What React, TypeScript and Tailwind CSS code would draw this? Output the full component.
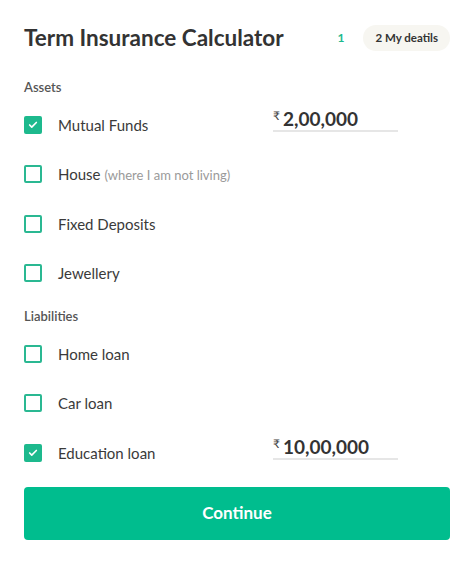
import { Check } from "lucide-react";

const assets = [
  { label: "Mutual Funds", checked: true, amount: "2,00,000" },
  { label: "House", note: "(where I am not living)", checked: false },
  { label: "Fixed Deposits", checked: false },
  { label: "Jewellery", checked: false },
];

const liabilities = [
  { label: "Home loan", checked: false },
  { label: "Car loan", checked: false },
  { label: "Education loan", checked: true, amount: "10,00,000" },
];

type Item = { label: string; note?: string; checked: boolean; amount?: string };

function Row({ item }: { item: Item }) {
  return (
    <div className="flex h-[49.5px] items-center">
      <div
        className={
          item.checked
            ? "flex h-[18px] w-[18px] items-center justify-center rounded-[2px] bg-[#1db98d]"
            : "h-[18px] w-[18px] rounded-[2px] border-2 border-[#2ab892]"
        }
      >
        {item.checked && <Check className="h-[10px] w-[10px] text-white" strokeWidth={4} />}
      </div>
      <div className="ml-4 flex-1 text-[15px] text-[#3a3a3a]">
        {item.label}
        {item.note && <span className="ml-1 text-[13px] text-[#9a9a9a]">{item.note}</span>}
      </div>
      {item.amount && (
        <div className="mr-[52px] flex w-[125px] -translate-y-[5px] items-start border-b-2 border-[#e6e6e6] pb-0">
          <span className="mt-[1px] text-[12px] leading-[14px] text-[#444]">₹</span>
          <span className="ml-[3px] text-[19px] font-bold leading-[22px] text-[#333]">{item.amount}</span>
        </div>
      )}
    </div>
  );
}

export default function App() {
  return (
    <div className="min-h-[566px] bg-white px-6 pt-[24px] font-['Lato',sans-serif]">
      <div className="flex h-[28px] items-center">
        <h1 className="flex-1 text-[22.5px] font-bold leading-[28px] text-[#333]">
          Term Insurance Calculator
        </h1>
        <span className="mr-[19px] text-[12px] font-bold text-[#1db98d]">1</span>
        <span className="flex h-[26px] items-center rounded-full bg-[#f7f6f1] px-3 text-[11.5px] font-bold text-[#333]">
          2 My deatils
        </span>
      </div>

      <div className="mt-[27px] text-[13px] font-semibold leading-[16px] text-[#555]">Assets</div>
      <div className="mt-[5px]">
        {assets.map((a) => (
          <Row key={a.label} item={a} />
        ))}
      </div>

      <div className="mt-[10px] text-[13px] font-semibold leading-[16px] text-[#555]">Liabilities</div>
      <div className="mt-[5px]">
        {liabilities.map((a) => (
          <Row key={a.label} item={a} />
        ))}
      </div>

      <button className="mt-[9px] flex h-[53px] w-full items-center justify-center rounded-[4px] bg-[#00bd8e] text-[17px] font-bold text-white">
        Continue
      </button>
    </div>
  );
}
